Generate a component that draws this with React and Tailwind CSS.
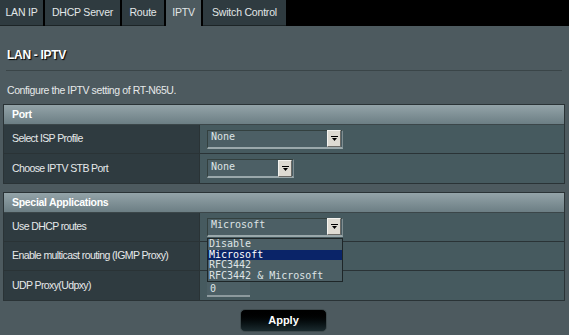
import React from "react";

const tabs = [
  { label: "LAN IP", w: "w-[43px]" },
  { label: "DHCP Server", w: "w-[75px]" },
  { label: "Route", w: "w-[42px]" },
  { label: "IPTV", w: "w-[35px]", active: true },
  { label: "Switch Control", w: "w-[83px]" },
];

function Arrow() {
  return (
    <div className="w-[14px] h-[17px] bg-[#dedbd3] border-t border-l border-t-[#f4f3ef] border-l-[#f4f3ef] border-r border-b border-r-[#6b6a66] border-b-[#6b6a66] flex items-center justify-center">
      <svg width="7" height="5" viewBox="0 0 7 5">
        <rect x="0" y="0" width="7" height="1" fill="#000" />
        <polygon points="1,2 6,2 3.5,5" fill="#000" />
      </svg>
    </div>
  );
}

function Select({ value, w }) {
  return (
    <div
      className={`${w} h-[19px] flex items-center justify-between bg-[#4c5f65] border-t border-l border-t-[#33403f] border-l-[#33403f] border-b-2 border-r border-b-[#9aa8ab] border-r-[#7f8d91] pl-[3px] pr-[1px]`}
    >
      <span className="text-[10px] text-[#dfe4e5] font-['DejaVu_Sans_Mono',monospace] leading-none -mt-[3px]">
        {value}
      </span>
      <Arrow />
    </div>
  );
}

function Row({ label, children, last }) {
  return (
    <div className={`flex h-[29px] ${last ? "" : "border-b border-[#2a3336]"}`}>
      <div className="w-[196px] bg-[#2f3b40] flex items-center pl-[8px] text-[10.5px] tracking-[-0.6px] text-[#e6e9ea] border-r border-[#2a3336]">
        {label}
      </div>
      <div className="flex-1 bg-[#465a5f] flex items-center pl-[7px] relative">{children}</div>
    </div>
  );
}

function Header({ title }) {
  return (
    <div className="h-[20px] bg-gradient-to-b from-[#94a4a9] to-[#6c7e84] border-b border-[#3b4649] flex items-center pl-[8px] text-[10.5px] tracking-[-0.3px] font-bold text-white">
      {title}
    </div>
  );
}

export default function App() {
  return (
    <div className="w-[569px] h-[335px] bg-[#4d5a5f] overflow-hidden font-['Liberation_Sans',Arial,sans-serif]">
      <div className="h-[26px] bg-black flex gap-[2px]">
        {tabs.map((t) => (
          <div
            key={t.label}
            className={`${t.w} flex items-center justify-center text-[10.5px] tracking-[-0.2px] text-[#e2e7e8] ${
              t.active ? "bg-[#4d5a5f]" : "bg-[#2f3b40] border-b border-[#1c2426]"
            }`}
          >
            {t.label}
          </div>
        ))}
      </div>

      <div className="px-[3px]">
        <div className="pl-[4px] pt-[20px] h-[44px] text-[12px] tracking-[-0.3px] font-bold text-white [text-shadow:1px_1px_1px_#000]">
          LAN - IPTV
        </div>
        <div className="ml-[3px] w-[556px] h-px bg-[#3a4548]" />
        <div className="pl-[4px] pt-[12px] h-[33px] text-[10.5px] tracking-[-0.4px] text-[#e6e9ea]">
          Configure the IPTV setting of RT-N65U.
        </div>

        <div className="w-[562px] border border-[#2a3336]">
          <Header title="Port" />
          <Row label="Select ISP Profile">
            <Select value="None" w="w-[136px]" />
          </Row>
          <Row label="Choose IPTV STB Port" last>
            <Select value="None" w="w-[87px]" />
          </Row>
        </div>

        <div className="w-[562px] mt-[8px] border border-[#2a3336]">
          <Header title="Special Applications" />
          <Row label="Use DHCP routes">
            <Select value="Microsoft" w="w-[136px]" />
            <div className="absolute left-[7px] top-[25px] z-10 w-[136px] bg-[#4c5f65] border border-[#1e2628] text-[10px] leading-[10.5px] text-[#dfe4e5] font-['DejaVu_Sans_Mono',monospace]">
              <div className="pl-[1px] h-[10.5px]">Disable</div>
              <div className="pl-[1px] h-[10.5px] bg-[#0a2468] text-white">Microsoft</div>
              <div className="pl-[1px] h-[10.5px]">RFC3442</div>
              <div className="pl-[1px] h-[10.5px]">RFC3442 &amp; Microsoft</div>
            </div>
          </Row>
          <Row label="Enable multicast routing (IGMP Proxy)" />
          <Row label="UDP Proxy(Udpxy)" last>
            <div className="w-[43px] h-[19px] mt-[4px] bg-[#4c5f65] border-b-2 border-[#8d9a9e] flex items-end pb-[1px] pl-[3px] text-[10px] leading-none text-[#dfe4e5] font-['DejaVu_Sans_Mono',monospace]">
              0
            </div>
          </Row>
        </div>

        <div className="flex justify-center mt-[8px] pr-[2px]">
          <div className="w-[87px] h-[23px] rounded-[5px] bg-gradient-to-b from-[#000] to-[#1b2b2f] border border-[#3e4a4d] flex items-center justify-center text-[11px] font-bold text-white">
            Apply
          </div>
        </div>
      </div>
    </div>
  );
}
